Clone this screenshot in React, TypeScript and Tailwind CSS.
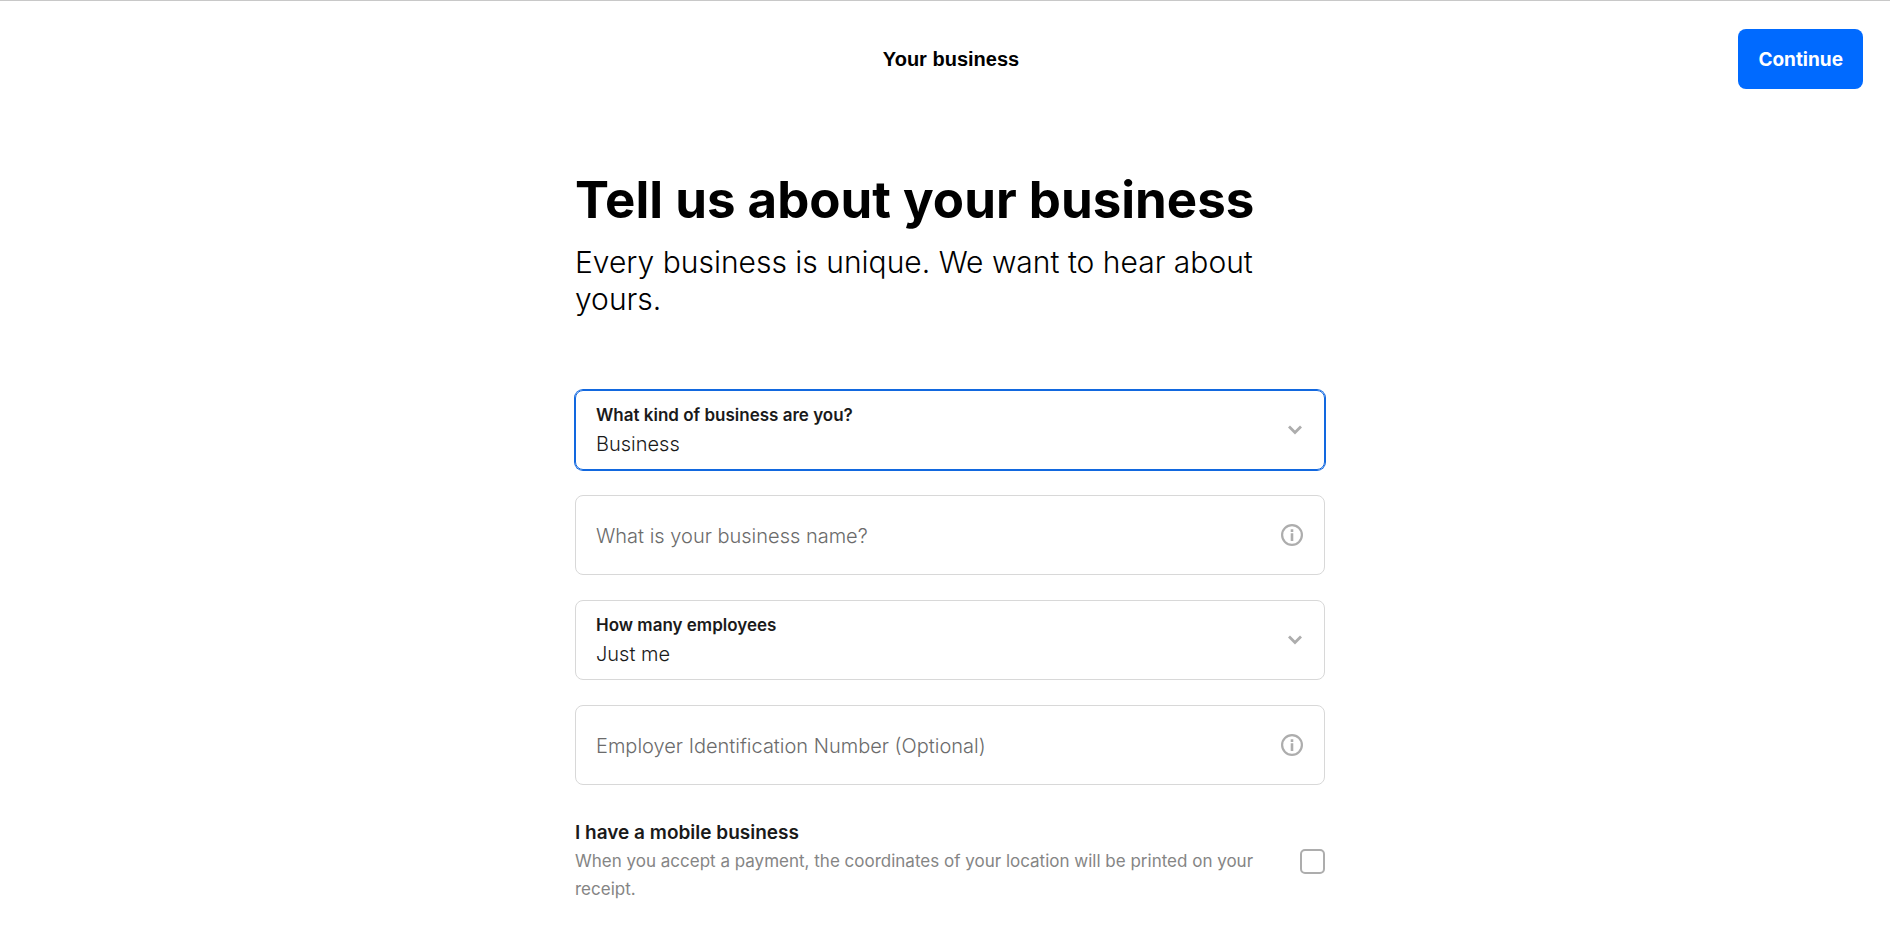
import { useId, useState } from "react";
import type { ReactNode } from "react";

const businessTypes = ["Business", "Individual", "Charitable organization"];
const employeeCounts = ["Just me", "2-10", "11-50", "51+"];

function ChevronIcon() {
  return (
    <svg
      className="pointer-events-none absolute right-[22px] h-[10px] w-[14px] text-[#adadad]"
      viewBox="0 0 14 10"
      fill="none"
      stroke="currentColor"
      strokeWidth="2.8"
      aria-hidden="true"
    >
      <path d="M1 1.5l6 6 6-6" />
    </svg>
  );
}

function InfoIcon() {
  return (
    <svg className="h-[22px] w-[22px]" viewBox="0 0 22 22" fill="none" aria-hidden="true">
      <circle cx="11" cy="11" r="9.9" stroke="currentColor" strokeWidth="2.2" />
      <path d="M9.7 9.3h2.6v7.7H9.7zM9.7 5.3h2.6v2.6H9.7z" fill="currentColor" />
    </svg>
  );
}

function Field({ children }: { children: ReactNode }) {
  return (
    <div className="relative flex items-center rounded-lg border border-[#d8d8d8] focus-within:border-[#1268df] focus-within:ring-1 focus-within:ring-[#1268df]">
      {children}
    </div>
  );
}

type SelectFieldProps = {
  label: string;
  options: string[];
  autoFocus?: boolean;
};

function SelectField({ label, options, autoFocus }: SelectFieldProps) {
  const id = useId();
  const [value, setValue] = useState(options[0]);

  return (
    <Field>
      <div className="flex-1 py-[10px]">
        <label htmlFor={id} className="block px-5 text-[17px] leading-7 font-semibold">
          {label}
        </label>
        <select
          id={id}
          value={value}
          autoFocus={autoFocus}
          onChange={(e) => setValue(e.target.value)}
          className="block h-[30px] w-full appearance-none bg-transparent px-5 text-[20px] leading-[30px] font-light outline-none"
        >
          {options.map((option) => (
            <option key={option}>{option}</option>
          ))}
        </select>
      </div>
      <ChevronIcon />
    </Field>
  );
}

function TextField({ label }: { label: string }) {
  return (
    <Field>
      <input
        type="text"
        aria-label={label}
        placeholder={label}
        className="min-w-0 flex-1 pt-[25px] pb-[23px] pl-5 text-[20px] leading-[30px] font-light outline-none placeholder:text-[#6b6b6b]"
      />
      <button type="button" aria-label="More information" className="px-[21px] text-[#adadad]">
        <InfoIcon />
      </button>
    </Field>
  );
}

export default function App() {
  const [mobile, setMobile] = useState(false);

  return (
    <div className="min-h-screen border-t border-[#c8c8c8] bg-white font-['Inter',sans-serif] text-[#1a1a1a]">
      <header className="grid grid-cols-[1fr_auto_1fr] items-center pt-7 pr-[27px] pl-[39px]">
        <p className="col-start-2 font-['Liberation_Sans',sans-serif] text-[20px] font-bold text-black">
          Your business
        </p>
        <button
          type="button"
          className="justify-self-end rounded-lg bg-[#006aff] px-5 pt-[17px] pb-[15px] text-[19px] leading-7 font-bold text-white"
        >
          Continue
        </button>
      </header>

      <main className="pt-[81px] pl-[10px]">
        <div className="mx-auto max-w-[750px]">
          <h1 className="text-[51px] leading-[60px] font-bold text-black">Tell us about your business</h1>
          <p className="mt-[14px] text-[30px] leading-[37px] font-light text-black">
            Every business is unique. We want to hear about yours.
          </p>

          <form className="mt-[72px]">
            <div className="space-y-[25px]">
              <SelectField label="What kind of business are you?" options={businessTypes} autoFocus />
              <TextField label="What is your business name?" />
              <SelectField label="How many employees" options={employeeCounts} />
              <TextField label="Employer Identification Number (Optional)" />
            </div>

            <label className="mt-[34px] flex items-center gap-6">
              <span className="flex-1 leading-7">
                <span className="block text-[19px] font-semibold">I have a mobile business</span>
                <span className="block text-[17px] text-[#858585]">
                  When you accept a payment, the coordinates of your location will be printed on your receipt.
                </span>
              </span>
              <input
                type="checkbox"
                checked={mobile}
                onChange={(e) => setMobile(e.target.checked)}
                className="h-[25px] w-[25px] appearance-none rounded-[5px] border-2 border-[#adadad] checked:border-[#006aff] checked:bg-[#006aff]"
              />
            </label>
          </form>
        </div>
      </main>
    </div>
  );
}
